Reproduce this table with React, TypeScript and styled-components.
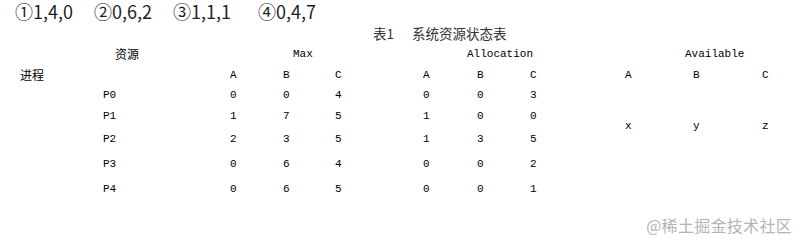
import React from 'react';
import styled, { createGlobalStyle } from 'styled-components';

const GlobalStyle = createGlobalStyle`
  html, body {
    margin: 0;
    padding: 0;
    background: #ffffff;
  }
`;

const OPTIONS = [
  { mark: '①', value: '1,4,0', width: 79 },
  { mark: '②', value: '0,6,2', width: 79 },
  { mark: '③', value: '1,1,1', width: 85 },
  { mark: '④', value: '0,4,7', width: 0 },
];

const ROWS = [
  { name: 'P0', max: ['0', '0', '4'], alloc: ['0', '0', '3'] },
  { name: 'P1', max: ['1', '7', '5'], alloc: ['1', '0', '0'] },
  { name: 'P2', max: ['2', '3', '5'], alloc: ['1', '3', '5'] },
  { name: 'P3', max: ['0', '6', '4'], alloc: ['0', '0', '2'] },
  { name: 'P4', max: ['0', '6', '5'], alloc: ['0', '0', '1'] },
];

function App() {
  return (
    <>
      <GlobalStyle />
      <Page>
        <Options>
          {OPTIONS.map((o) => (
            <Option key={o.mark} $width={o.width}>
              {o.mark}{o.value}
            </Option>
          ))}
        </Options>

        <Caption>
          <span>表1</span>
          <CaptionTitle>系统资源状态表</CaptionTitle>
        </Caption>

        <Table>
          {/* group headers */}
          <GroupHead $col="1 / span 2" $pad={95}>资源</GroupHead>
          <GroupHead $col="3 / span 3" $pad={63} $latin>Max</GroupHead>
          <GroupHead $col="6 / span 3" $pad={44} $latin>Allocation</GroupHead>
          <GroupHead $col="9 / span 3" $pad={60} $latin>Available</GroupHead>

          {/* resource letters */}
          <RowLabel>进程</RowLabel>
          <Cell $col={3}>A</Cell>
          <Cell $col={4}>B</Cell>
          <Cell $col={5}>C</Cell>
          <Cell $col={6}>A</Cell>
          <Cell $col={7}>B</Cell>
          <Cell $col={8}>C</Cell>
          <Cell $col={9}>A</Cell>
          <Cell $col={10}>B</Cell>
          <Cell $col={11}>C</Cell>

          {ROWS.map((r) => (
            <React.Fragment key={r.name}>
              <Cell $col={2}>{r.name}</Cell>
              {r.max.map((v, i) => (
                <Cell key={'m' + i} $col={3 + i}>{v}</Cell>
              ))}
              {r.alloc.map((v, i) => (
                <Cell key={'a' + i} $col={6 + i}>{v}</Cell>
              ))}
            </React.Fragment>
          ))}

          <Unknown $col={9}>x</Unknown>
          <Unknown $col={10}>y</Unknown>
          <Unknown $col={11}>z</Unknown>
        </Table>

        <Watermark>@稀土掘金技术社区</Watermark>
      </Page>
    </>
  );
}

const Page = styled.div`
  position: relative;
  width: 804px;
  height: 246px;
  overflow: hidden;
  color: #1a1a1a;
`;

const Options = styled.div`
  display: flex;
  padding-left: 15px;
  height: 22px;
  font-family: 'Noto Sans CJK SC', 'Noto Sans', sans-serif;
  font-size: 18px;
  line-height: 22px;
  color: #1f1f1f;
`;

const Option = styled.span<{ $width: number }>`
  flex: ${(p) => (p.$width ? `0 0 ${p.$width}px` : '0 0 auto')};
  white-space: nowrap;
`;

const Caption = styled.div`
  display: flex;
  padding-left: 373px;
  height: 22px;
  font-family: 'Noto Sans CJK SC', 'Noto Sans', sans-serif;
  font-size: 13.5px;
  line-height: 22px;
  color: #333333;
`;

const CaptionTitle = styled.span`
  margin-left: 18px;
`;

const Table = styled.div`
  display: grid;
  padding-left: 20px;
  grid-template-columns: 83px 127px 53px 52px 88px 54px 53px 95px 68px 69px 1fr;
  grid-template-rows: 20px 21px 20px 22px 24px 25px 26px;
  align-items: center;
  font-family: 'Liberation Mono', 'Courier New', monospace;
  font-size: 11px;
  color: #000000;
`;

const GroupHead = styled.div<{ $col: string; $pad: number; $latin?: boolean }>`
  grid-row: 1;
  grid-column: ${(p) => p.$col};
  padding-left: ${(p) => p.$pad}px;
  font-family: ${(p) =>
    p.$latin
      ? "'Liberation Mono', 'Courier New', monospace"
      : "'Noto Sans CJK SC', sans-serif"};
  font-size: ${(p) => (p.$latin ? '11px' : '12px')};
  line-height: 14px;
`;

const RowLabel = styled.div`
  grid-row: 2;
  grid-column: 1;
  font-family: 'Noto Sans CJK SC', sans-serif;
  font-size: 12px;
  line-height: 14px;
`;

const Cell = styled.div<{ $col: number }>`
  grid-column: ${(p) => p.$col};
  line-height: 14px;
`;

const Unknown = styled.div<{ $col: number }>`
  grid-column: ${(p) => p.$col};
  grid-row: 3 / span 4;
  padding-bottom: 10px;
  line-height: 14px;
`;

const Watermark = styled.div`
  position: absolute;
  top: 215px;
  right: 12px;
  font-family: 'Noto Sans CJK SC', sans-serif;
  font-size: 16px;
  line-height: 20px;
  color: #b4b4b4;
  letter-spacing: 0.3px;
`;

export default App;
